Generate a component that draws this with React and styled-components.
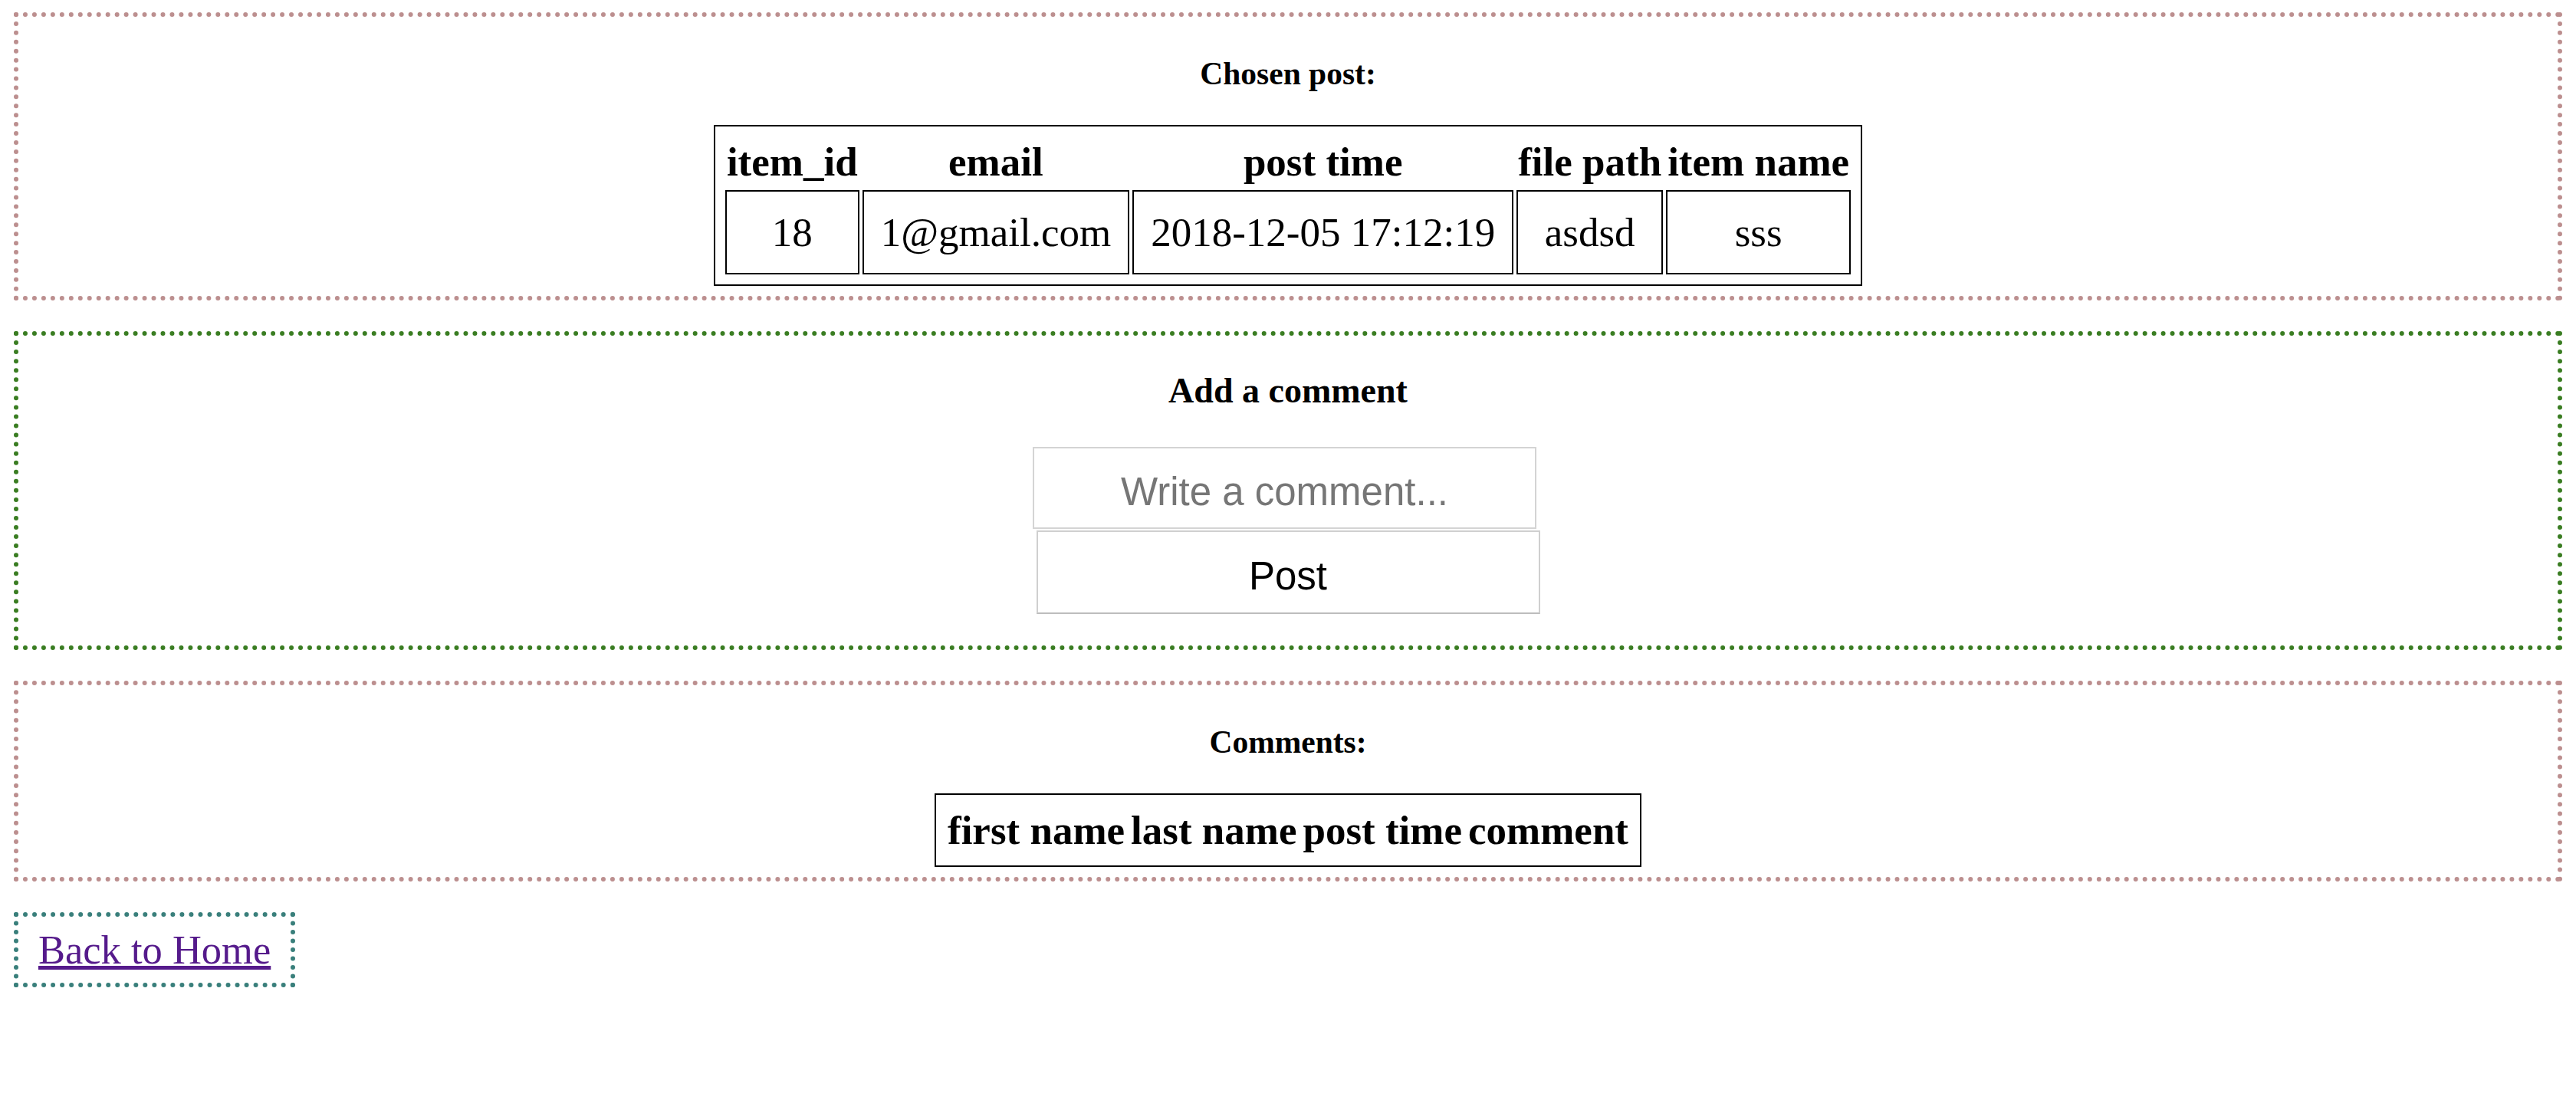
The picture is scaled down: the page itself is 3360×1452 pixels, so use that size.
import React from "react";
import styled, { createGlobalStyle } from "styled-components";

const Global = createGlobalStyle`
  html, body { background: #ffffff; }
  body {
    margin: 16px 18px;
    font-family: "Liberation Serif", "Times New Roman", serif;
    color: #000;
  }
`;

const Section = styled.section`
  border: 6px dotted ${(p) => p.$color};
  padding: 13px;
  margin: 0 0 40px;
  display: flex;
  flex-direction: column;
  align-items: center;
`;

const Title = styled.h3`
  margin: ${(p) => p.$margin || "38px 0 44px"};
  font-size: ${(p) => p.$size || "41.5px"};
  line-height: ${(p) => p.$lh || "46px"};
  font-weight: bold;
  text-align: center;
`;

const Table = styled.table`
  border: 2px solid #000;
  padding: 9px;
  border-spacing: 4px;
  font-size: 53px;
  line-height: 62px;
`;

const Th = styled.th`
  padding: 2px;
  font-weight: bold;
  text-align: center;
  white-space: nowrap;
`;

const Td = styled.td`
  border: 2px solid #000;
  padding: 22px;
  text-align: center;
  white-space: nowrap;
`;

const Form = styled.form`
  display: flex;
  flex-direction: column;
  align-items: center;
  gap: 2px;
  margin: 0 0 28px;
`;

const Input = styled.input`
  box-sizing: border-box;
  width: 657px;
  height: 107px;
  margin-right: 9px;
  padding: 9px 0 0;
  border: 2px solid #d4d4d4;
  background: #fff;
  font-family: "Liberation Sans", Arial, sans-serif;
  font-size: 51px;
  text-align: center;
  color: #000;
  outline: none;
  &::placeholder { color: #767676; }
`;

const Button = styled.button`
  box-sizing: border-box;
  width: 657px;
  height: 109px;
  border: 2px solid #cfcfcf;
  border-bottom-color: #bdbdbd;
  background: #fff;
  font-family: "Liberation Sans", Arial, sans-serif;
  font-size: 51px;
  color: #000;
  padding: 9px 0 0;
`;

const LinkBox = styled.div`
  display: inline-block;
  border: 6px dotted #397f7b;
  padding: 13px 26px;
  font-size: 52.5px;
  line-height: 60px;
`;

const HomeLink = styled.a`
  color: #551a8b;
  text-decoration: underline;
`;

const post = {
  item_id: 18,
  email: "1@gmail.com",
  time: "2018-12-05 17:12:19",
  path: "asdsd",
  name: "sss",
};

export default function App() {
  return (
    <>
      <Global />
      <Section $color="#bc8f8f">
        <Title>Chosen post:</Title>
        <Table>
          <thead>
            <tr>
              <Th>item_id</Th>
              <Th>email</Th>
              <Th>post time</Th>
              <Th>file path</Th>
              <Th>item name</Th>
            </tr>
          </thead>
          <tbody>
            <tr>
              <Td>{post.item_id}</Td>
              <Td>{post.email}</Td>
              <Td>{post.time}</Td>
              <Td>{post.path}</Td>
              <Td>{post.name}</Td>
            </tr>
          </tbody>
        </Table>
      </Section>

      <Section $color="#3a7d22">
        <Title $size="46px" $lh="53px" $margin="32px 0 47px">
          Add a comment
        </Title>
        <Form onSubmit={(e) => e.preventDefault()}>
          <Input placeholder="Write a comment..." />
          <Button type="submit">Post</Button>
        </Form>
      </Section>

      <Section $color="#bc8f8f">
        <Title>Comments:</Title>
        <Table>
          <thead>
            <tr>
              <Th>first name</Th>
              <Th>last name</Th>
              <Th>post time</Th>
              <Th>comment</Th>
            </tr>
          </thead>
        </Table>
      </Section>

      <LinkBox>
        <HomeLink href="#">Back to Home</HomeLink>
      </LinkBox>
    </>
  );
}
